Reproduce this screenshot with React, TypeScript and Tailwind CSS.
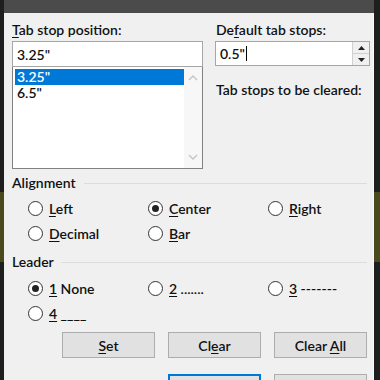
import React from 'react';

const font = { fontFamily: 'Lato, "Noto Sans", sans-serif' };

const U = ({ children }: { children: React.ReactNode }) => <span className="underline underline-offset-2">{children}</span>;

const Radio = ({ checked, children }: { checked?: boolean; children: React.ReactNode }) => (
  <div className="flex items-center gap-[6px] h-[25px]">
    <span className="w-[15px] h-[15px] rounded-full border border-[#333] bg-white flex items-center justify-center shrink-0">
      {checked && <span className="w-[7px] h-[7px] rounded-full bg-[#222]" />}
    </span>
    <span className="text-[14px] leading-none">{children}</span>
  </div>
);

const Group = ({ label, lineGap }: { label: string; lineGap: string }) => (
  <div className={`flex items-center ${lineGap} pr-[4px]`}>
    <span className="text-[14px] leading-[16px]">{label}</span>
    <div className="flex-1 h-px bg-[#dcdcdc]" />
  </div>
);

const Btn = ({ children, primary }: { children: React.ReactNode; primary?: boolean }) => (
  <div
    className={`w-[93px] h-[26px] shrink-0 flex items-center justify-center text-[14px] bg-[#e1e1e1] border ${
      primary ? 'border-[#0078d7] border-2' : 'border-[#adadad]'
    }`}
  >
    <span>{children}</span>
  </div>
);

export default function App() {
  return (
    <div className="w-[380px] h-[380px] overflow-hidden flex bg-[#1e1e1e] text-[#111] font-semibold" style={font}>
      <div className="w-[4px] shrink-0 flex flex-col">
        <div className="h-[192px] shrink-0" />
        <div className="h-[70px] shrink-0 bg-[#4a4a1c]" />
      </div>
      <div className="w-[370px] shrink-0 flex flex-col min-h-0">
        <div className="h-[13px] shrink-0 bg-[#4b4b4b] overflow-hidden pl-[16px]">
          <div className="text-[14px] leading-[16px] -mt-[13px] text-[#ddd]">Tabs</div>
        </div>
        <div className="flex-1 min-h-0 overflow-hidden bg-[#f0f0f0] border-r border-[#fafafa] pl-[8px] pr-[2px]">
          <div className="flex gap-[12px] pt-[9px]">
            {/* left column */}
            <div className="w-[191px] flex flex-col">
              <div className="text-[14px] leading-[16px] mb-[3px]">
                <U>T</U>ab stop position:
              </div>
              <div className="h-[26px] bg-white border border-[#a6a6a6] flex items-center pl-[4px] text-[14px]">3.25"</div>
              <div className="h-[102px] bg-white border border-[#828282] border-t-0 flex">
                <div className="flex-1 pt-[2px] pl-[2px]">
                  <div className="h-[16px] bg-[#0078d7] text-white text-[14px] leading-[16px] pl-[2px]">3.25"</div>
                  <div className="h-[16px] text-[14px] leading-[16px] pl-[2px]">6.5"</div>
                </div>
                <div className="w-[18px] bg-[#f7f7f7] flex flex-col items-center justify-between py-[8px]">
                  <svg width="10" height="6" viewBox="0 0 10 6">
                    <path d="M1 5 L5 1 L9 5" fill="none" stroke="#c4c4c4" strokeWidth="1.4" />
                  </svg>
                  <svg width="10" height="6" viewBox="0 0 10 6">
                    <path d="M1 1 L5 5 L9 1" fill="none" stroke="#c4c4c4" strokeWidth="1.4" />
                  </svg>
                </div>
              </div>
            </div>
            {/* right column */}
            <div className="w-[155px] flex flex-col">
              <div className="text-[14px] leading-[16px] mb-[3px] pl-[1px]">
                De<U>f</U>ault tab stops:
              </div>
              <div className="h-[25px] bg-white border border-[#a6a6a6] flex items-center">
                <span className="flex-1 pl-[4px] text-[14px] flex items-center">
                  0.5"<span className="w-px h-[15px] bg-black ml-[1px]" />
                </span>
                <div className="w-[17px] h-full border-l border-[#d0d0d0] bg-[#f0f0f0] flex flex-col">
                  <div className="flex-1 flex items-center justify-center border-b border-[#d0d0d0]">
                    <svg width="7" height="4" viewBox="0 0 7 4"><path d="M0 4 L3.5 0 L7 4Z" fill="#222" /></svg>
                  </div>
                  <div className="flex-1 flex items-center justify-center">
                    <svg width="7" height="4" viewBox="0 0 7 4"><path d="M0 0 L3.5 4 L7 0Z" fill="#222" /></svg>
                  </div>
                </div>
              </div>
              <div className="text-[14px] leading-[16px] mt-[16px] pl-[1px] whitespace-nowrap">Tab stops to be cleared:</div>
            </div>
          </div>

          <div className="mt-[6px]">
            <Group label="Alignment" lineGap="gap-[8px]" />
          </div>
          <div className="grid grid-cols-[120px_120px_120px] pl-[16px] mt-[5px]">
            <Radio><U>L</U>eft</Radio>
            <Radio checked><U>C</U>enter</Radio>
            <Radio><U>R</U>ight</Radio>
            <Radio><U>D</U>ecimal</Radio>
            <Radio><U>B</U>ar</Radio>
          </div>

          <div className="mt-[8px]">
            <Group label="Leader" lineGap="gap-[7px]" />
          </div>
          <div className="grid grid-cols-[120px_120px_120px] pl-[16px] mt-[6px]">
            <Radio checked><U>1</U> None</Radio>
            <Radio><U>2</U> .......</Radio>
            <Radio><U>3</U> -------</Radio>
            <Radio><U>4</U> ____</Radio>
          </div>

          <div className="flex justify-end gap-[13px] pr-[4px] mt-[6px]">
            <Btn><U>S</U>et</Btn>
            <Btn>Cl<U>e</U>ar</Btn>
            <Btn>Clear <U>A</U>ll</Btn>
          </div>
          <div className="flex justify-end gap-[13px] pr-[4px] mt-[16px]">
            <Btn primary>OK</Btn>
            <Btn>Cancel</Btn>
          </div>
        </div>
      </div>
      <div className="w-[6px] shrink-0 flex flex-col">
        <div className="h-[192px] shrink-0" />
        <div className="h-[70px] shrink-0 bg-[#4a4a1c]" />
      </div>
    </div>
  );
}
